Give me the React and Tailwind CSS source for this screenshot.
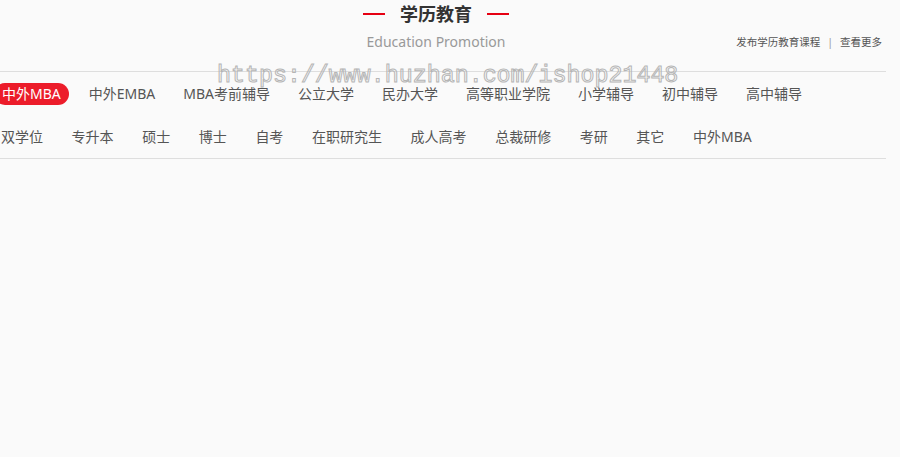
import React from 'react';

const rowOne = ['中外MBA', '中外EMBA', 'MBA考前辅导', '公立大学', '民办大学', '高等职业学院', '小学辅导', '初中辅导', '高中辅导'];
const rowTwo = ['双学位', '专升本', '硕士', '博士', '自考', '在职研究生', '成人高考', '总裁研修', '考研', '其它', '中外MBA'];

const App = () => {
  return (
    <div className="relative min-h-screen w-full bg-[#fafafa] font-['Noto_Sans','Noto_Sans_CJK_SC',sans-serif]">
      <div className="w-[886px]">
        {/* Header */}
        <div className="flex items-center justify-center pr-[14px] pt-[1px] h-[27px]">
          <span className="w-[22px] h-[2px] bg-[#e60012]"></span>
          <h2 className="mx-[15px] text-[18px] leading-[24px] font-bold text-[#333]">学历教育</h2>
          <span className="w-[22px] h-[2px] bg-[#e60012]"></span>
        </div>
        <div className="grid grid-cols-[1fr_auto_1fr] items-center h-[30px]">
          <div></div>
          <p className="mr-[14px] text-[14px] leading-[20px] text-[#999]">Education Promotion</p>
          <div className="flex justify-end items-center pr-[4px] text-[10.5px] text-[#555] leading-[16px]">
            <a href="#" className="hover:text-[#e60012]">发布学历教育课程</a>
            <span className="mx-[7px] text-[#999]">|</span>
            <a href="#" className="hover:text-[#e60012]">查看更多</a>
          </div>
        </div>

        {/* Categories */}
        <div className="mt-[14px] border-t border-b border-[#dedede] overflow-hidden">
          <ul className="flex items-center gap-3 -ml-[6px] mt-[11px] h-[22px]">
            {rowOne.map((item, i) => (
              <li
                key={i}
                className={
                  i === 0
                    ? 'px-2 h-[22px] leading-[22px] rounded-full bg-[#ec1c2a] text-white text-[14px] whitespace-nowrap'
                    : 'px-2 h-[22px] leading-[22px] text-[#555] text-[14px] whitespace-nowrap'
                }
              >
                {item}
              </li>
            ))}
          </ul>
          <ul className="flex items-center gap-[12.6px] -ml-[7px] mt-[21px] mb-[10px] h-[22px]">
            {rowTwo.map((item, i) => (
              <li key={i} className="px-2 h-[22px] leading-[22px] text-[#555] text-[14px] whitespace-nowrap">
                {item}
              </li>
            ))}
          </ul>
        </div>
      </div>

      {/* Watermark */}
      <div className="pointer-events-none absolute left-[217px] top-[61px] font-['Liberation_Mono',monospace] text-[23.3px] leading-[30px] text-transparent [-webkit-text-stroke:1px_#b5b5b5] whitespace-nowrap">
        https://www.huzhan.com/ishop21448
      </div>
    </div>
  );
};

export default App;
